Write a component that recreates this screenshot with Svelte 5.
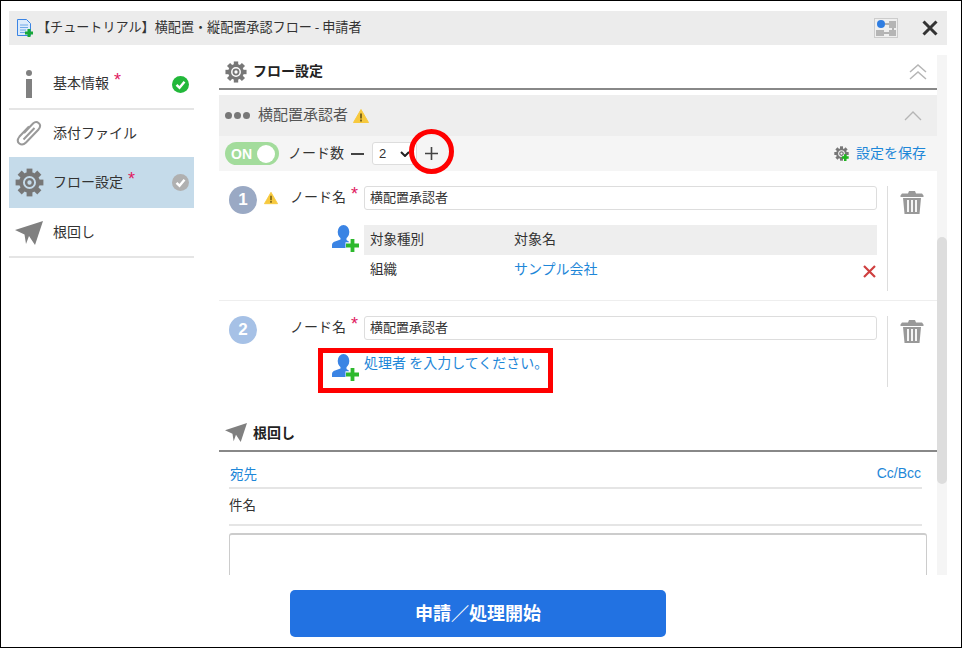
<script>
	const teeth = [0, 45, 90, 135, 180, 225, 270, 315];
</script>

{#snippet gear(size, plus = false)}
	<svg class="icon" width={size} height={size} viewBox="0 0 24 24">
		{#each teeth as t}
			<rect x="9.6" y="0.5" width="4.8" height="5.400" fill="#777" transform="rotate({t} 12 12)" />
		{/each}
		<circle cx="12" cy="12" r="7" fill="none" stroke="#777" stroke-width="3.200" />
		<circle cx="12" cy="12" r="2.800" fill="none" stroke="#777" stroke-width="2" />
		{#if plus}
			<path d="M18 13v11M12.500 18.500h11" stroke="#1fb51f" stroke-width="4" />
		{/if}
	</svg>
{/snippet}

{#snippet plane(w, h)}
	<svg class="icon" width={w} height={h} viewBox="0 0 28 24">
		<path d="M0 9 28 0 20 24 14 15 11 23 9.500 13.500Z" fill="#808080" />
	</svg>
{/snippet}

{#snippet check(color)}
	<svg class="icon" width="17" height="17" viewBox="0 0 17 17">
		<circle cx="8.500" cy="8.500" r="8.500" fill={color} />
		<path d="M4.500 8.800 7.500 11.700 12.500 5.800" fill="none" stroke="#fff" stroke-width="2.400" />
	</svg>
{/snippet}

{#snippet warn(w)}
	<svg class="icon" width={w} height={w} viewBox="0 0 16 16">
		<path d="M8 1.500 15.500 14.500H.5Z" fill="#f7c93e" stroke="#f7c93e" stroke-linejoin="round" />
		<path d="M8 5.500v5M8 11.500v2" stroke="#5a4a10" stroke-width="1.500" />
	</svg>
{/snippet}

{#snippet person()}
	<svg class="icon" width="27" height="27" viewBox="0 0 27 27">
		<ellipse cx="11.500" cy="7" rx="5.800" ry="7" fill="#3b84e4" />
		<path d="M8.500 12h6v3l5 3.500V23H0v-3Q0 17.500 3 16.500L8.500 14.500Z" fill="#3b84e4" />
		<path d="M20.500 13V27M13.500 20.500H27" stroke="#fff" stroke-width="6.500" />
		<path d="M20.500 14V27M14 20.500H27" stroke="#2db92d" stroke-width="3.800" />
	</svg>
{/snippet}

{#snippet trash()}
	<svg class="icon" width="24" height="25" viewBox="0 0 24 25">
		<path d="M0.500 5.500 2 3.500H8L9 1h6l1 2.500h6L23.500 5.500V7H.5Z" fill="#999" />
		<path d="M3 8h18l-1.500 16H4.500Z" fill="#999" />
		<path d="M8 10v12M12 10v12M16 10v12" stroke="#fff" stroke-width="1.800" />
	</svg>
{/snippet}

<div class="window">
	<header class="titlebar">
		<svg class="icon doc" width="17" height="18" viewBox="0 0 17 18">
			<path d="M1.500 .5h9l4 4v12h-13Z" fill="#dcebfb" stroke="#3b84e4" />
			<path d="M4 6h8M4 8.500h8M4 11h6M4 13.500h5" stroke="#6fa8e8" />
			<path d="M13 10v8M9 14h8" stroke="#18a83a" stroke-width="3" />
		</svg>
		<span class="title">【チュートリアル】横配置・縦配置承認フロー - 申請者</span>
		<svg class="icon flowbtn" width="24" height="20" viewBox="0 0 24 20">
			<rect x=".5" y=".5" width="23" height="19" fill="#efefef" stroke="#ccc" />
			<circle cx="7" cy="6" r="4" fill="#2f7de1" />
			<rect x="15" y="3" width="7" height="7" fill="#b5b5b5" />
			<rect x="2" y="12" width="8" height="6" fill="#b5b5b5" />
			<rect x="15" y="12" width="7" height="6" fill="#b5b5b5" />
			<path d="M11 6h4M19 10v2M10 15h5" stroke="#777" />
		</svg>
		<svg class="icon close" width="16" height="16" viewBox="0 0 16 16">
			<path d="M1.500 1.500 14.500 14.500M14.500 1.500 1.500 14.500" stroke="#333" stroke-width="3" />
		</svg>
	</header>

	<div class="body">
		<nav class="side">
			<div class="item first">
				<span class="sicon">
					<svg class="icon" width="10" height="28" viewBox="0 0 10 28">
						<circle cx="5" cy="3" r="3" fill="#808080" />
						<rect x="2" y="9" width="6" height="19" fill="#808080" />
					</svg>
				</span>
				<span class="label">基本情報<i class="req">*</i></span>
				{@render check('#22b83a')}
			</div>
			<div class="item">
				<span class="sicon">
					<svg class="icon" width="26" height="27" viewBox="0 0 26 27">
						<path d="M8 13 17 3.500Q20 .8 22.800 3.200T22.500 9.500L10 22.500Q6.500 26 3.300 23.500T3.500 16.500L13 6.500M7.500 19.500 18.500 8" fill="none" stroke="#999" stroke-width="2" />
					</svg>
				</span>
				<span class="label">添付ファイル</span>
			</div>
			<div class="item active">
				<span class="sicon">{@render gear(29)}</span>
				<span class="label">フロー設定<i class="req">*</i></span>
				{@render check('#b0b0b0')}
			</div>
			<div class="item last">
				<span class="sicon">{@render plane(28, 24)}</span>
				<span class="label">根回し</span>
			</div>
		</nav>

		<main class="scroll">
			<div class="content">
				<div class="sechead flow">
					{@render gear(22)}
					<span class="up">フロー設定</span>
					<svg class="icon chev2" width="18" height="16" viewBox="0 0 18 16">
						<path d="M1 8 9 1l8 7M1 15 9 8l8 7" fill="none" stroke="#b5b5b5" stroke-width="1.500" />
					</svg>
				</div>

				<div class="acc">
					<span class="dots"><b></b><b></b><b></b></span>
					<span class="acctitle up">横配置承認者</span>
					{@render warn(16)}
					<svg class="icon chev1" width="18" height="10" viewBox="0 0 18 10">
						<path d="M1 9 9 1l8 8" fill="none" stroke="#b5b5b5" stroke-width="1.300" />
					</svg>
				</div>

				<div class="toolbar">
					<div class="toggle"><span>ON</span><b></b></div>
					<span class="count up">ノード数</span>
					<span class="minus"></span>
					<div class="select">
						<span>2</span>
						<svg class="icon" width="10" height="6" viewBox="0 0 10 6">
							<path d="M1 1 5 5 9 1" fill="none" stroke="#222" stroke-width="2" />
						</svg>
					</div>
					<svg class="icon plus" width="13" height="13" viewBox="0 0 13 13">
						<path d="M6.500 0V13M0 6.500H13" stroke="#444" stroke-width="1.600" />
					</svg>
					<span class="save">{@render gear(15, true)}<a class="up" href="#save">設定を保存</a></span>
				</div>

				<section class="node one">
					<div class="nodemain">
						<div class="namerow">
							<span class="num n1">1</span>
							<span class="warnslot">{@render warn(14)}</span>
							<span class="nodelabel up">ノード名<i class="req">*</i></span>
							<div class="input">横配置承認者</div>
						</div>
						<div class="assignee">
							<span class="pslot">{@render person()}</span>
							<div class="targets">
								<div class="thead"><span class="c1 up">対象種別</span><span class="up">対象名</span></div>
								<div class="trow">
									<span class="c1 up">組織</span>
									<a class="up" href="#org">サンプル会社</a>
									<svg class="icon del" width="13" height="13" viewBox="0 0 13 13">
										<path d="M1 1 12 12M12 1 1 12" stroke="#cf3f3f" stroke-width="2.200" />
									</svg>
								</div>
							</div>
						</div>
					</div>
					<div class="nodeside">{@render trash()}</div>
				</section>

				<section class="node two">
					<div class="nodemain">
						<div class="namerow">
							<span class="num n2">2</span>
							<span class="warnslot"></span>
							<span class="nodelabel up">ノード名<i class="req">*</i></span>
							<div class="input">横配置承認者</div>
						</div>
						<div class="assignee empty">
							<span class="pslot">{@render person()}</span>
							<a href="#add">処理者 を入力してください。</a>
						</div>
					</div>
					<div class="nodeside">{@render trash()}</div>
				</section>

				<div class="sechead nemawashi">
					{@render plane(22, 19)}
					<span>根回し</span>
				</div>

				<div class="mail">
					<div class="mailrow to"><a href="#to">宛先</a><a class="cc" href="#cc">Cc/Bcc</a></div>
					<div class="mailrow subject">件名</div>
					<div class="textarea"></div>
				</div>
			</div>

			<div class="track"><div class="thumb"></div></div>
		</main>
	</div>

	<footer class="foot">
		<button>申請／処理開始</button>
	</footer>

	<div class="mark circle"></div>
	<div class="mark box"></div>
</div>

<style>
	:global(body) {
		margin: 0;
		background: #fff;
	}

	.window {
		position: relative;
		box-sizing: border-box;
		width: 962px;
		height: 648px;
		border: 1px solid #000;
		padding: 10px 14px 0 8px;
		overflow: hidden;
		font-family: "Noto Sans CJK JP", "Liberation Sans", sans-serif;
		font-size: 14px;
		color: #333;
		line-height: 20px;
	}

	.icon {
		display: block;
		flex: none;
	}

	/* the CJK font sits low in its line box, this lifts it back */
	.up {
		padding-bottom: 4px;
	}

	a {
		color: #1e87d8;
		text-decoration: none;
	}

	.req {
		color: #e0195f;
		font-family: "Liberation Sans", sans-serif;
		font-style: normal;
		font-size: 18px;
		line-height: 0;
		margin-left: 5px;
		vertical-align: 2px;
	}

	.titlebar {
		display: flex;
		align-items: center;
		height: 34px;
		background: #ececec;
	}

	.doc {
		margin-left: 7px;
	}

	.title {
		margin-left: 4px;
		padding-bottom: 3px;
		font-size: 13.100px;
		flex: 1;
	}

	.flowbtn {
		margin-right: 24px;
	}

	.close {
		margin-right: 9px;
	}

	.body {
		display: flex;
		height: 530px;
	}

	.side {
		width: 185px;
		padding-top: 15px;
	}

	.item {
		display: flex;
		align-items: center;
		height: 49px;
		box-sizing: border-box;
	}

	.item.first {
		height: 50px;
		border-bottom: 2px solid #e5e5e5;
	}

	.item:nth-child(2) {
		height: 47px;
	}

	.item.active {
		height: 51px;
		background: #c5dbea;
		margin-bottom: 1px;
	}

	.item.last {
		height: 49px;
		border-bottom: 2px solid #e5e5e5;
	}

	.sicon {
		width: 40px;
		display: flex;
		justify-content: center;
	}

	.label {
		flex: 1;
		margin-left: 4px;
		padding-bottom: 4px;
		font-size: 14px;
	}

	.item > :global(svg) {
		margin-right: 5px;
	}

	.scroll {
		display: flex;
		margin: 10px 0 0 25px;
		width: 728px;
		height: 520px;
		overflow: hidden;
	}

	.content {
		width: 718px;
		flex: none;
	}

	.track {
		width: 10px;
		flex: none;
		background: #f5f5f5;
		padding-top: 182px;
		box-sizing: border-box;
	}

	.thumb {
		height: 247px;
		background: #ddd;
		border-radius: 5px;
	}

	.sechead {
		display: flex;
		align-items: center;
		gap: 6px;
		padding-left: 6px;
		height: 33px;
		border-bottom: 2px solid #888;
		font-weight: 700;
		font-size: 14px;
		color: #222;
		box-sizing: content-box;
	}

	.chev2 {
		margin-left: auto;
		margin-right: 10px;
	}

	.acc {
		display: flex;
		align-items: center;
		height: 41px;
		margin-top: 5px;
		background: #eee;
		padding-left: 6px;
	}

	.dots {
		display: flex;
		gap: 2px;
		margin-right: 8px;
	}

	.dots b {
		width: 7px;
		height: 7px;
		border-radius: 50%;
		background: #777;
	}

	.acctitle {
		color: #555;
		font-size: 15px;
		margin-right: 5px;
	}

	.chev1 {
		margin-left: auto;
		margin-right: 15px;
	}

	.toolbar {
		display: flex;
		align-items: center;
		height: 35px;
		background: #f5f5f5;
		padding-left: 6px;
	}

	.toggle {
		display: flex;
		align-items: center;
		justify-content: space-between;
		box-sizing: border-box;
		width: 54px;
		height: 23px;
		border-radius: 12px;
		background: #a3dc9c;
		padding: 0 4px 0 6px;
		color: #fff;
		font-weight: 700;
		font-size: 14px;
		font-family: "Liberation Sans", sans-serif;
	}

	.toggle b {
		width: 18px;
		height: 18px;
		border-radius: 50%;
		background: #fff;
	}

	.count {
		margin-left: 9px;
	}

	.minus {
		width: 13px;
		height: 2px;
		background: #444;
		margin-left: 7px;
	}

	.select {
		display: flex;
		align-items: center;
		justify-content: space-between;
		box-sizing: border-box;
		width: 45px;
		height: 23px;
		margin-left: 8px;
		padding: 0 6px;
		background: #fff;
		border: 1px solid #ddd;
		border-radius: 3px;
		font-family: "Liberation Sans", sans-serif;
		font-size: 13px;
	}

	.plus {
		margin-left: 8px;
	}

	.save {
		display: flex;
		align-items: center;
		gap: 7px;
		margin-left: auto;
		margin-right: 11px;
		font-size: 14px;
	}

	.node {
		display: flex;
		padding-top: 15px;
	}

	.node.one {
		height: 130px;
		box-sizing: border-box;
		border-bottom: 1px solid #eee;
	}

	.node.two {
		height: 103px;
		box-sizing: border-box;
	}

	.nodemain {
		width: 658px;
	}

	.namerow {
		display: flex;
		align-items: center;
		height: 24px;
		padding-left: 10px;
	}

	.num {
		width: 28px;
		height: 28px;
		flex: none;
		margin-top: 4px;
		border-radius: 50%;
		color: #fff;
		font-weight: 700;
		font-size: 17px;
		line-height: 28px;
		text-align: center;
		font-family: "Liberation Sans", sans-serif;
	}

	.n1 {
		background: #9aa9c4;
	}

	.n2 {
		background: #a6c1e6;
	}

	.warnslot {
		width: 14px;
		margin-left: 7px;
	}

	.nodelabel {
		width: 73px;
		flex: none;
		margin-left: 12px;
		white-space: nowrap;
	}

	.input {
		box-sizing: border-box;
		width: 513px;
		height: 24px;
		flex: none;
		margin-left: 1px;
		border: 1px solid #ddd;
		border-radius: 3px;
		padding-left: 5px;
		background: #fff;
		font-size: 13px;
		line-height: 20px;
	}

	.assignee {
		display: flex;
		margin-top: 15px;
	}

	.pslot {
		width: 145px;
		padding-left: 113px;
		box-sizing: border-box;
		flex: none;
	}

	.targets {
		width: 513px;
		font-size: 14px;
	}

	.thead {
		display: flex;
		align-items: center;
		height: 30px;
		background: #eee;
	}

	.trow {
		display: flex;
		align-items: center;
		height: 29px;
	}

	.c1 {
		width: 150px;
		padding-left: 6px;
		box-sizing: border-box;
		font-size: 13.500px;
	}

	.del {
		margin-left: auto;
		margin-top: 3px;
		margin-right: 1px;
	}

	.nodeside {
		width: 49px;
		height: 105px;
		margin-left: 10px;
		border-left: 1px solid #ddd;
		padding: 4px 0 0 12px;
		box-sizing: border-box;
	}

	.node.two .nodeside {
		height: 71px;
		padding-top: 3px;
	}

	.assignee.empty {
		margin-top: 14px;
		font-size: 14px;
		line-height: 20px;
	}

	.assignee.empty a {
		margin-top: -2px;
	}

	.nemawashi {
		height: 36px;
		padding-top: 10px;
		box-sizing: content-box;
	}

	.mail {
		padding-left: 10px;
	}

	.mailrow {
		display: flex;
		justify-content: space-between;
		align-items: center;
		width: 693px;
		height: 37px;
		border-bottom: 2px solid #e5e5e5;
		font-size: 13.500px;
		box-sizing: border-box;
		padding: 0 1px;
	}

	.mailrow.to {
		padding-top: 6px;
	}

	.cc {
		font-family: "Liberation Sans", sans-serif;
		font-size: 14px;
	}

	.subject {
		padding: 0 0 5px;
	}

	.textarea {
		box-sizing: border-box;
		width: 698px;
		height: 80px;
		margin-top: 7px;
		border: 1px solid #ccc;
		border-top-width: 2px;
		border-radius: 3px;
	}

	.foot {
		display: flex;
		justify-content: center;
		padding: 15px 0 0 8px;
	}

	.foot button {
		width: 376px;
		height: 47px;
		padding: 0 0 4px;
		border: none;
		border-radius: 5px;
		background: #2272e2;
		color: #fff;
		font-family: inherit;
		font-size: 18px;
		font-weight: 700;
		margin-right: 8px;
	}

	.mark {
		position: absolute;
		box-sizing: border-box;
		border: 5px solid #f00;
		pointer-events: none;
	}

	.circle {
		left: 408px;
		top: 128px;
		width: 45px;
		height: 45px;
		border-radius: 50%;
	}

	.box {
		left: 317px;
		top: 347px;
		width: 235px;
		height: 45px;
	}
</style>
